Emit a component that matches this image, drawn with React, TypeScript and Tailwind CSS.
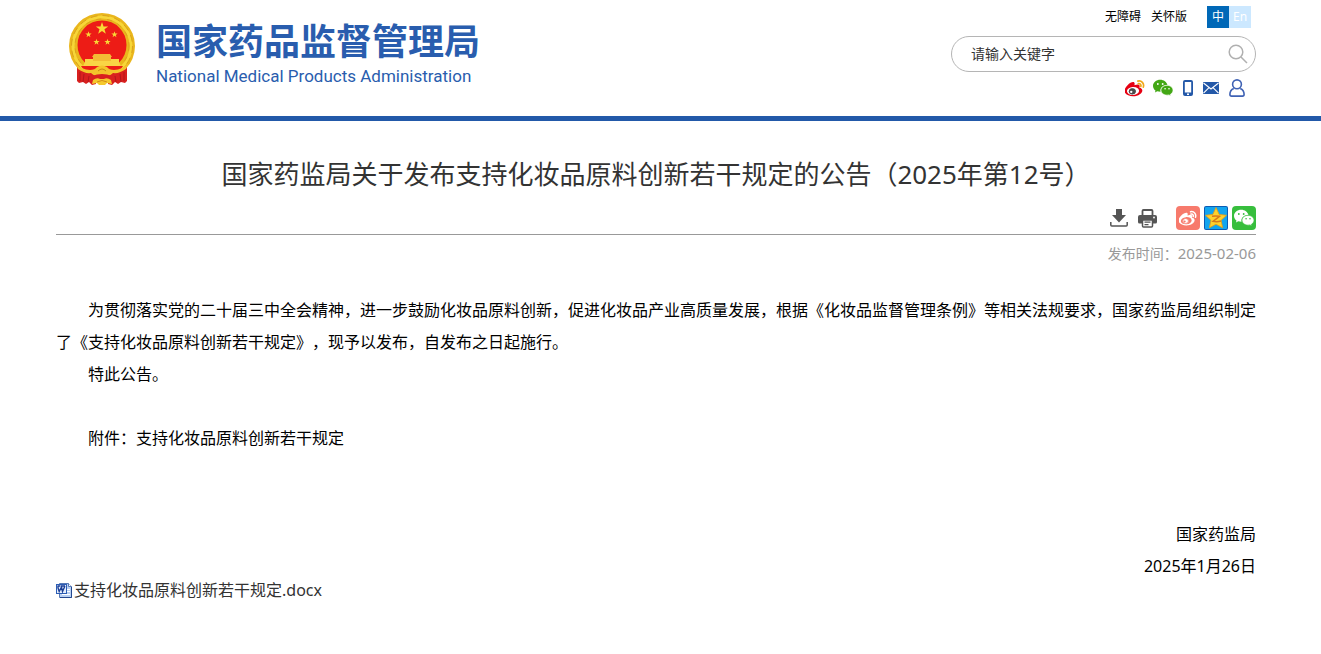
import { useState } from "react";
import type { FormEvent, ReactNode } from "react";

const WECHAT_BACK =
  "M8.7 2.2C3.9 2.2 0 5.5 0 9.5c0 2.200 1.200 4.200 3 5.500l-.6 2.500 2.700-1.500c1.100.4 2.300.6 3.600.6h.5a5.900 5.900 0 0 1-.2-1.600c0-3.700 3.400-6.600 7.700-6.600h.6C16.500 4.900 12.900 2.200 8.700 2.200z";
const WECHAT_FRONT =
  "M24 14.700c0-3.200-3.200-5.900-7.200-5.900s-7.200 2.700-7.200 5.900 3.200 5.900 7.200 5.900c.8 0 1.700-.1 2.400-.3l2.200 1.300-.5-2c1.900-1.100 3.100-2.900 3.100-4.900z";

function starPoints(cx: number, cy: number, r: number) {
  return Array.from({ length: 10 }, (_, i) => {
    const radius = i % 2 === 0 ? r : r * 0.4;
    const angle = (Math.PI / 5) * i - Math.PI / 2;
    return `${cx + radius * Math.cos(angle)},${cy + radius * Math.sin(angle)}`;
  }).join(" ");
}

function Emblem() {
  return (
    <svg viewBox="0 0 66 74" className="h-[74px] w-[66px]" aria-hidden="true">
      <circle cx="33" cy="33" r="33" fill="#eab61c" />
      <circle cx="33" cy="33" r="29" fill="none" stroke="#f7d638" strokeWidth="3" />
      <circle cx="33" cy="33" r="30.500" fill="none" stroke="#d9a11c" strokeWidth="1" strokeDasharray="7 5" />
      <circle cx="33" cy="33" r="27" fill="none" stroke="#dca31c" strokeWidth="1" strokeDasharray="5 6" />
      <circle cx="33" cy="32" r="24.500" fill="#ed1c16" />
      <polygon points={starPoints(33, 15.5, 6.5)} fill="#f9d936" />
      <polygon points={starPoints(19.500, 21.500, 3.3)} fill="#f9d936" />
      <polygon points={starPoints(45.500, 21.500, 3.3)} fill="#f9d936" />
      <polygon points={starPoints(27.500, 29, 3.3)} fill="#f9d936" />
      <polygon points={starPoints(38.500, 29, 3.3)} fill="#f9d936" />
      <path d="M25 41h16l2 3H23zM24 44h18v4H24z" fill="#f3bc35" />
      <path d="M16 46h8v2h18v-2h8v3l2 4H14l2-4z" fill="#f9d545" />
      <path d="M12 53h42l-5 7H17z" fill="#ed1c16" />
      <path d="M8 52q4 6 12 7l7 2v10l-4 1-3-3-3 2-3-2-4 1-2-2z" fill="#d9201f" />
      <path d="M58 52q-4 6-12 7l-7 2v10l4 1 3-3 3 2 3-2 4 1 2-2z" fill="#d9201f" />
      <path d="M11 59v9M15 61l-1 8M20 63l-1 6M46 63l1 6M51 61l1 8M55 59v9" stroke="#b3151b" strokeWidth="1" />
      <path d="M6 50q7 7 15 7 5 0 7-3 5-3 10 0 2 3 7 3 8 0 15-7l-3 6q-7 5-13 4-4 4-11 4t-11-4q-6 1-13-4z" fill="#f3c42b" />
      <path d="M29 58q4-4 8 0" fill="none" stroke="#c98b12" />
      <path d="M23 63q10-4 20 0v3H23z" fill="#d9201f" />
      <path d="M24 67q4-3 7-1h4q3-2 7 1l1 4-5-1-2 2h-6l-2-2-5 1z" fill="#f5c92e" />
      <path d="M28 69q5-3 10 0" fill="none" stroke="#d48d18" />
    </svg>
  );
}

function WeiboIcon({ mono = false, className }: { mono?: boolean; className: string }) {
  return (
    <svg viewBox="0 0 24 24" className={className} aria-hidden="true">
      <path
        d="M10 20.800c-4.700.5-8.700-1.600-9-4.700C.700 13 4.300 10.200 9 9.700c4.700-.4 8.700 1.700 9 4.700.3 3.100-3.300 6-8 6.400z"
        fill={mono ? "#f77a6c" : "#fff"}
      />
      <path
        fill={mono ? "#fff" : "#e60012"}
        d="M10.098 20.323c-3.977.391-7.414-1.406-7.672-4.020-.259-2.609 2.759-5.047 6.740-5.441 3.979-.394 7.413 1.404 7.671 4.018.259 2.600-2.759 5.049-6.737 5.439zM17.737 11.700c-.345-.105-.578-.18-.401-.649.386-.998.426-1.860 0-2.474-.786-1.139-2.943-1.079-5.416-.03 0 0-.776.345-.579-.285.381-1.215.329-2.234-.27-2.833-1.350-1.350-4.943.045-8.023 3.128C.736 10.864-.6 13.318-.6 15.437c0 4.049 5.201 6.514 10.294 6.514 6.674 0 11.116-3.869 11.116-6.944 0-1.859-1.565-2.909-3.073-3.307z"
        fillRule="evenodd"
      />
      <ellipse cx="8.800" cy="16" rx="4" ry="3.500" fill={mono ? "#fff" : "#4b4b4b"} />
      <ellipse cx="8.800" cy="16" rx="3.800" ry="3.300" fill="none" stroke={mono ? "#f77a6c" : "#4b4b4b"} />
      <circle cx="7.500" cy="16.600" r="1.400" fill={mono ? "#f77a6c" : "#fff"} />
      <path
        d="M16 6.800c2-.5 3.700 1.300 3 3.300M15.400 3.700c4.400-1.100 8 2.700 6.600 7.200"
        fill="none"
        stroke={mono ? "#fff" : "#f0a818"}
        strokeWidth="2"
        strokeLinecap="round"
      />
    </svg>
  );
}

function WechatIcon({ fill, hole, className }: { fill: string; hole: string; className: string }) {
  return (
    <svg viewBox="0 0 24 24" className={className} aria-hidden="true">
      <path d={WECHAT_BACK} fill={fill} />
      <path d={WECHAT_FRONT} fill={fill} stroke={hole} strokeWidth="0.800" />
      <g fill={hole}>
        <circle cx="5.800" cy="7.200" r="1.100" />
        <circle cx="11.600" cy="7.200" r="1.100" />
        <circle cx="14.500" cy="12.900" r="1" />
        <circle cx="19.200" cy="12.900" r="1" />
      </g>
    </svg>
  );
}

function PhoneIcon() {
  return (
    <svg viewBox="0 0 10 16" className="h-4 w-2.5" aria-hidden="true">
      <path fillRule="evenodd" fill="#2358a8" d="M2 0h6q2 0 2 2v12q0 2-2 2H2q-2 0-2-2V2q0-2 2-2zM1.800 2v10.500h6.400V2zM4 13.500v1.400h2v-1.400z" />
    </svg>
  );
}

function MailIcon() {
  return (
    <svg viewBox="0 0 16 12" className="h-3 w-4" aria-hidden="true">
      <rect width="16" height="12" rx="0.500" fill="#2358a8" />
      <path d="M.5 1l7.500 6 7.500-6M.5 11.200L6 5.700M15.500 11.200L10 5.700" fill="none" stroke="#fff" strokeWidth="1.100" />
    </svg>
  );
}

function UserIcon() {
  return (
    <svg viewBox="0 0 16 18" className="h-[18px] w-4" fill="none" stroke="#3f62b4" strokeWidth="1.600" aria-hidden="true">
      <circle cx="8" cy="5.300" r="4.400" />
      <path d="M4.800 9.500C2.500 10.500.9 12.500.9 15.300c0 1.200.5 1.800 1.600 1.800h11c1.100 0 1.600-.6 1.600-1.800 0-2.800-1.600-4.800-3.900-5.800" />
    </svg>
  );
}

function DownloadIcon() {
  return (
    <svg viewBox="0 0 18 18" className="h-[18px] w-[18px]" aria-hidden="true">
      <path d="M6 0h6v6h4l-7 7.500L2 6h4z" fill="#555" />
      <path d="M.8 13v3q0 1 1 1h14.400q1 0 1-1v-3" fill="none" stroke="#555" strokeWidth="1.500" />
    </svg>
  );
}

function PrintIcon() {
  return (
    <svg viewBox="0 0 19 19" className="h-[19px] w-[19px]" aria-hidden="true">
      <path d="M4.500 6V2q0-1 1-1h8q1 0 1 1v4" fill="none" stroke="#555" strokeWidth="1.800" />
      <path d="M2 6h15q2 0 2 2v5q0 1.500-1.500 1.500h-16Q0 14.500 0 13V8q0-2 2-2z" fill="#555" />
      <path d="M4.500 11h10v6q0 1-1 1h-8q-1 0-1-1z" fill="#fff" stroke="#555" strokeWidth="1.500" />
      <path d="M6.500 13.200h6M6.500 15.700h4" stroke="#555" strokeWidth="1.200" />
      <circle cx="16" cy="8.500" r="0.900" fill="#fff" />
    </svg>
  );
}

function QzoneIcon() {
  return (
    <svg viewBox="0 0 24 24" className="h-6 w-6" aria-hidden="true">
      <rect width="24" height="24" rx="2" fill="#0a5cb4" />
      <rect x="1" y="1" width="22" height="22" rx="1" fill="#12a5ef" />
      <path
        d="M12 1.500l3.200 6.900 7.300.9-5.400 5 1.500 7.500L12 18.200l-6.600 3.600 1.500-7.500-5.400-5 7.300-.9z"
        fill="#fed22d"
        stroke="#e99b13"
        strokeWidth="0.800"
        strokeLinejoin="round"
      />
      <path d="M8 10.300q4-.8 7.500 0l-6.500 5q4 1 8-.3" fill="none" stroke="#d9791a" strokeWidth="1.500" />
    </svg>
  );
}

function WordFileIcon() {
  return (
    <svg viewBox="0 0 16 16" className="h-4 w-4" aria-hidden="true">
      <path d="M3.500 1.500h9l3 3v11h-12z" fill="#b9d0f3" stroke="#5779b5" />
      <path d="M12.500 1.500v3h3" fill="#fff" stroke="#5779b5" />
      <path d="M11 7.500h3M11 9.500h3M6 12.500h8" fill="none" stroke="#fff" />
      <path d="M4 15.500h11.500V5" fill="none" stroke="#24488e" />
      <rect x="0.500" y="2.500" width="10" height="9" fill="#e6effd" stroke="#2c5db4" />
      <path d="M2 4v2l1.200 3.500L5.500 5l1 4.500L9 4M1.500 4h3M5 4h4" fill="none" stroke="#1c3f96" strokeWidth="1.400" />
    </svg>
  );
}

function IconLink({ label, children }: { label: string; children: ReactNode }) {
  return (
    <a href="#" aria-label={label} title={label} className="block shrink-0">
      {children}
    </a>
  );
}

function SearchForm() {
  const [keyword, setKeyword] = useState("");

  const handleSubmit = (e: FormEvent) => {
    e.preventDefault();
  };

  return (
    <form
      onSubmit={handleSubmit}
      className="mt-2 flex h-9 w-[305px] items-center rounded-full border border-[#b5b5b5] pr-[7px] pl-[19px]"
    >
      <input
        type="text"
        aria-label="请输入关键字"
        placeholder="请输入关键字"
        value={keyword}
        onChange={(e) => setKeyword(e.target.value)}
        className="min-w-0 flex-1 bg-transparent text-sm text-[#333] outline-none placeholder:text-[#333]"
      />
      <button type="submit" aria-label="搜索">
        <svg viewBox="0 0 20 20" className="h-5 w-5" fill="none" stroke="#b0b0b0" strokeWidth="1.500" aria-hidden="true">
          <circle cx="8" cy="8" r="6.800" />
          <path d="M13 13l6 6" />
        </svg>
      </button>
    </form>
  );
}

function Header() {
  return (
    <header className="border-b-[5px] border-[#2259a9] pr-[9px]">
      <div className="mx-auto flex h-[116px] max-w-[1200px] justify-between">
        <a href="#" className="flex items-start pt-[13px] pl-[13px]">
          <Emblem />
          <span className="ml-[21px] block whitespace-nowrap text-[#295dae]">
            <span className="mt-[7px] block text-4xl leading-[44px] font-bold">国家药品监督管理局</span>
            <span className="block font-['Roboto','Liberation_Sans',sans-serif] text-[17px] leading-6">
              National Medical Products Administration
            </span>
          </span>
        </a>

        <div className="flex flex-col items-end pt-1.5">
          <div className="flex items-center pr-[5px] text-xs leading-[22px] text-black">
            <a href="#">无障碍</a>
            <a href="#" className="ml-2.5">关怀版</a>
            <a href="#" className="ml-5 w-[22px] bg-[#0068b7] text-center text-white">中</a>
            <a href="#" className="w-[22px] bg-[#cce8ff] text-center text-white">En</a>
          </div>
          <SearchForm />
          <div className="mt-1.5 flex items-center gap-2.5 pr-[11px]">
            <div className="flex gap-2">
              <IconLink label="微博">
                <WeiboIcon className="h-5 w-5" />
              </IconLink>
              <IconLink label="微信">
                <WechatIcon fill="#43a715" hole="#fff" className="h-5 w-5" />
              </IconLink>
            </div>
            <IconLink label="移动客户端">
              <PhoneIcon />
            </IconLink>
            <IconLink label="邮箱">
              <MailIcon />
            </IconLink>
            <IconLink label="个人中心">
              <UserIcon />
            </IconLink>
          </div>
        </div>
      </div>
    </header>
  );
}

function Toolbar() {
  return (
    <div className="flex items-center justify-end pb-1">
      <button type="button" aria-label="下载">
        <DownloadIcon />
      </button>
      <button type="button" aria-label="打印" className="ml-2.5">
        <PrintIcon />
      </button>
      <div className="ml-[19px] flex gap-1">
        <IconLink label="分享到微博">
          <span className="flex h-6 w-6 items-center justify-center rounded-sm bg-[#f77a6c]">
            <WeiboIcon mono className="h-[18px] w-[18px]" />
          </span>
        </IconLink>
        <IconLink label="分享到QQ空间">
          <QzoneIcon />
        </IconLink>
        <IconLink label="分享到微信">
          <span className="flex h-6 w-6 items-center justify-center rounded-sm bg-[#37be3d]">
            <WechatIcon fill="#fff" hole="#37be3d" className="h-5 w-5" />
          </span>
        </IconLink>
      </div>
    </div>
  );
}

export default function App() {
  return (
    <div
      lang="zh-CN"
      className="bg-white font-['Noto_Sans','Noto_Sans_CJK_SC',sans-serif] [text-spacing-trim:space-all]"
    >
      <Header />
      <main className="pr-[9px]">
        <article className="mx-auto max-w-[1200px]">
          <h1 className="mt-8 text-center text-[26px] leading-[42px] text-[#333]">
            国家药监局关于发布支持化妆品原料创新若干规定的公告（2025年第12号）
          </h1>
          <div className="mt-[11px] border-b border-[#999]">
            <Toolbar />
          </div>
          <p className="mt-2 text-right text-sm leading-5 text-[#999]">
            发布时间：<time className="text-[15px]">2025-02-06</time>
          </p>

          <div className="mt-[30px] text-base leading-8 text-black">
            <p className="indent-8">
              为贯彻落实党的二十届三中全会精神，进一步鼓励化妆品原料创新，促进化妆品产业高质量发展，根据《化妆品监督管理条例》等相关法规要求，国家药监局组织制定了《支持化妆品原料创新若干规定》，现予以发布，自发布之日起施行。
            </p>
            <p className="indent-8">特此公告。</p>
            <p className="mt-8 indent-8">附件：支持化妆品原料创新若干规定</p>
            <p className="mt-16 text-right">国家药监局</p>
            <p className="text-right">2025年1月26日</p>
          </div>

          <a href="#" className="flex w-fit items-center gap-0.5 text-base leading-4 text-[#333]">
            <WordFileIcon />
            支持化妆品原料创新若干规定.docx
          </a>
        </article>
      </main>
    </div>
  );
}
